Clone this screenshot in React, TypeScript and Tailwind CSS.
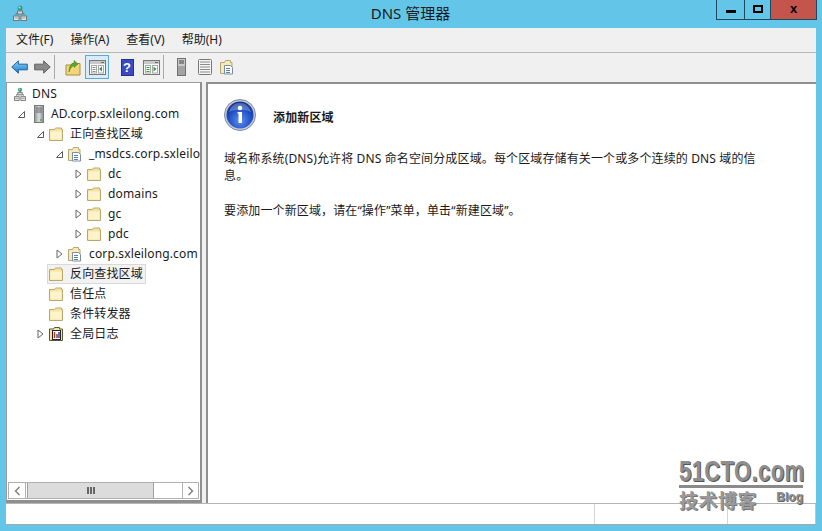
import React from "react";

const font = { fontFamily: '"Noto Sans","Noto Sans CJK SC",sans-serif' };

function Folder({ tint = "#f7e3a1" }: { tint?: string }) {
  return (
    <svg width="16" height="16" viewBox="0 0 16 16" className="shrink-0">
      <path d="M1.5 3.5h5l1 -1.5h6v1.5h1v11h-13z" fill={tint} stroke="#b9a86e" strokeWidth="1" />
      <path d="M2.5 5.5h11v8h-11z" fill="#fdf3cc" />
    </svg>
  );
}

function Zone() {
  return (
    <svg width="16" height="16" viewBox="0 0 16 16" className="shrink-0">
      <path d="M1.5 3.5h4l1 -2h5v2h1.500v11h-11.500z" fill="#f7e9b8" stroke="#b3a676" />
      <path d="M5.500 6.500h6l2 2v6.500h-8z" fill="#fff" stroke="#7b8da3" />
      <path d="M7 9.500h4M7 11.500h4M7 13.500h4" stroke="#5a7fae" />
    </svg>
  );
}

function DnsIcon({ width = 14 }: { width?: number }) {
  return (
    <svg width={width} height="17" viewBox="0 0 14 17" className="shrink-0">
      <circle cx="7" cy="3" r="2.500" fill="#2f9c8f" />
      <circle cx="6.500" cy="2.500" r="1" fill="#a9e2d0" />
      <path d="M7 5v4M3 10V8.500h8V10" stroke="#777" fill="none" />
      <rect x="4.500" y="6" width="5" height="3" fill="#d8d8d8" stroke="#777" />
      <rect x="0.500" y="11" width="5.500" height="4.500" fill="#e6e6e6" stroke="#777" />
      <rect x="8" y="11" width="5.500" height="4.500" fill="#e6e6e6" stroke="#777" />
      <path d="M1.500 13h3.500M9 13h3.500" stroke="#999" />
    </svg>
  );
}

function ServerIcon() {
  return (
    <span className="flex w-[16px] shrink-0 justify-end pr-px">
      <svg width="10" height="18" viewBox="0 0 10 18" className="shrink-0">
        <defs>
          <linearGradient id="srv" x1="0" x2="1" y1="0" y2="0">
            <stop offset="0" stopColor="#8d9398" />
            <stop offset="0.5" stopColor="#d9dde0" />
            <stop offset="1" stopColor="#858a8e" />
          </linearGradient>
        </defs>
        <rect x="0.500" y="0.500" width="9" height="17" fill="url(#srv)" stroke="#777" />
        <path d="M2 3h6M2 5h6M2 7h6" stroke="#666" />
        <rect x="6" y="14" width="2" height="2" fill="#58b947" />
      </svg>
    </span>
  );
}

function LogIcon() {
  return (
    <svg width="16" height="16" viewBox="0 0 16 16" className="shrink-0">
      <path d="M1.500 3h4l1-1.500h5v1.500h3v11.500h-13z" fill="#f3e3a6" stroke="#5c5330" />
      <rect x="4.500" y="4.500" width="8" height="9" fill="#fff" stroke="#222" />
      <path d="M6.500 6v6M9 8v4" stroke="#b1342a" strokeWidth="1.500" />
      <path d="M11 6v6" stroke="#2a4fa8" strokeWidth="1.500" />
    </svg>
  );
}

function Expander({ open }: { open?: boolean }) {
  return (
    <svg width="7" height="10" viewBox="0 0 7 10" className="shrink-0">
      {open ? (
        <path d="M6.500 2.500v6h-6z" fill="#fff" stroke="#595959" />
      ) : (
        <path d="M1 1l5 4 -5 4z" fill="#fff" stroke="#666" />
      )}
    </svg>
  );
}

function Row({
  depth,
  exp,
  icon,
  label,
  selected,
}: {
  depth: string;
  exp?: "open" | "closed";
  icon: React.ReactNode;
  label: string;
  selected?: boolean;
}) {
  return (
    <div className={`flex h-5 items-center ${depth}`}>
      <span className="flex w-[10px] shrink-0 justify-start">
        {exp ? <Expander open={exp === "open"} /> : null}
      </span>
      <span
        className={`flex h-5 items-center gap-[5px] pr-[2px] ${
          selected ? "border border-[#d9d9d9] bg-[#f2f2f2]" : "pl-[1px]"
        }`}
      >
        {icon}
        <span className="whitespace-nowrap pl-[1px] text-[12px] leading-5 tracking-[0.14px] text-[#1a1a1a]">{label}</span>
      </span>
    </div>
  );
}

function Back() {
  return (
    <svg width="17" height="16" viewBox="0 0 18 16">
      <defs>
        <linearGradient id="bk" x1="0" x2="0" y1="0" y2="1">
          <stop offset="0" stopColor="#8fd3f7" />
          <stop offset="1" stopColor="#1778c9" />
        </linearGradient>
      </defs>
      <path d="M0.800 8l7-6.500v3.500h9.500v6h-9.500v3.500z" fill="url(#bk)" stroke="#14609f" />
    </svg>
  );
}

function Forward() {
  return (
    <svg width="17" height="16" viewBox="0 0 18 16">
      <path d="M17.200 8l-7-6.500v3.500h-9.500v6h9.500v3.500z" fill="#8a8a8a" stroke="#5c5c5c" />
    </svg>
  );
}

function UpFolder() {
  return (
    <svg width="16" height="18" viewBox="0 0 16 18">
      <path d="M1 7h5l1-1.500h8v11.500h-14z" fill="#f2d679" stroke="#a98e3e" />
      <path d="M4 14c0-5 1.500-8 5-9V2.500l4 3.500-4 3.500V7.500c-2 .5-4 3-5 6.500z" fill="#5ea72a" stroke="#3e7a17" strokeWidth="0.500" />
    </svg>
  );
}

function Pane({ side }: { side: "l" | "r" }) {
  return (
    <svg width="17" height="15" viewBox="0 0 17 15">
      <rect x="0.500" y="0.500" width="16" height="14" fill="#f7f7f7" stroke="#777" />
      <rect x="1" y="1" width="15" height="3" fill="#c9c9c9" />
      <path d="M12 2.500h3" stroke="#666" />
      <rect x="2.500" y="5.500" width="5" height="7.500" fill="#fff" stroke="#aaa" />
      <path d="M3.500 7.500h3M3.500 9.500h3M3.500 11.500h3" stroke={side === "l" ? "#888" : "#2f9d3a"} />
      <rect x="9.500" y="5.500" width="5" height="7.500" fill="#fff" stroke="#aaa" />
      {side === "l" ? (
        <path d="M13 6.500v5l-3-2.500z" fill="#2f9d3a" />
      ) : (
        <path d="M10.500 6.500v5l3-2.500z" fill="#2f9d3a" />
      )}
    </svg>
  );
}

function Help() {
  return (
    <span
      className="flex h-[17px] w-[13px] items-center justify-center border border-[#23319a] bg-[#3a49c4] text-[13px] font-bold leading-none text-white"
      style={{ fontFamily: '"Liberation Sans",sans-serif' }}
    >
      ?
    </span>
  );
}

function TowerTool() {
  return (
    <svg width="9" height="18" viewBox="0 0 9 18">
      <rect x="0.500" y="0.500" width="8" height="17" fill="#c9c9c9" stroke="#707070" />
      <path d="M2 3h5M2 5h5" stroke="#444" />
      <rect x="1" y="8" width="7" height="9" fill="#a3a3a3" />
    </svg>
  );
}

function ListTool() {
  return (
    <svg width="14" height="16" viewBox="0 0 14 16">
      <rect x="0.500" y="0.500" width="13" height="15" rx="1" fill="#f5f5f5" stroke="#777" />
      <path d="M2 3h10M2 5.500h10M2 8h10M2 10.500h10M2 13h10" stroke="#8a8a8a" />
    </svg>
  );
}

function InfoIcon() {
  return (
    <svg width="32" height="32" viewBox="0 0 32 32" className="shrink-0">
      <defs>
        <radialGradient id="inf" cx="0.500" cy="0.700" r="0.700">
          <stop offset="0" stopColor="#5f8ff0" />
          <stop offset="0.600" stopColor="#1f4fc4" />
          <stop offset="1" stopColor="#12308a" />
        </radialGradient>
      </defs>
      <circle cx="16" cy="16" r="15.500" fill="#c6ccd8" stroke="#7f8aa0" />
      <circle cx="16" cy="16" r="13.500" fill="url(#inf)" />
      <path d="M5 13c2-6 6-9 11-9s9 3 11 9c-6-3-16-3-22 0z" fill="#fff" fillOpacity="0.250" />
      <circle cx="16" cy="9" r="2.300" fill="#fff" />
      <path d="M13.500 13h4.500v11h-3.500v-9.500h-1z" fill="#fff" />
    </svg>
  );
}

function ToolBtn({ children, active, narrow }: { children: React.ReactNode; active?: boolean; narrow?: boolean }) {
  return (
    <span
      className={`flex h-[24px] items-center justify-center ${narrow ? "w-[20px]" : "w-[24px]"} ${
        active ? "border border-[#5aa9d6] bg-[#d7ecf8]" : ""
      }`}
    >
      {children}
    </span>
  );
}

export default function App() {
  return (
    <div className="relative flex h-[531px] w-[822px] flex-col overflow-hidden bg-[#63c6e8]" style={font}>
      <div className="flex h-[28px] shrink-0">
        <div className="flex w-[27px] justify-end pt-[5px]">
          <DnsIcon />
        </div>
        <div className="flex-1 pl-[78px] pt-[3px] text-center text-[15px] leading-[20px] text-[#1a1a1a]">DNS 管理器</div>
        <div className="mr-[5px] flex h-[20px] items-stretch border border-t-0 border-[#1f4a5e]">
          <span className="flex w-[28px] items-end justify-center border-r border-[#1f4a5e] pb-[6px]">
            <span className="h-[3px] w-[10px] bg-black" />
          </span>
          <span className="flex w-[26px] items-center justify-center border-r border-[#1f4a5e] pb-[2px]">
            <span className="h-[8px] w-[10px] border-2 border-black" />
          </span>
          <span
            className="flex w-[45px] items-center justify-center bg-[#c4554d] pb-[2px] text-[13px] font-bold leading-none text-black"
            style={{ fontFamily: '"Liberation Sans",sans-serif' }}
          >
            x
          </span>
        </div>
      </div>

      <div className="mx-[6px] mb-[6px] flex min-h-0 flex-1 flex-col border-b border-[#a7a7a7] bg-[#f0f0f0]">
        <div className="flex h-[25px] shrink-0 items-center gap-[17px] border-b border-[#b5b5b5] pl-[10px] text-[12px] text-[#1a1a1a]">
          <span>文件(F)</span>
          <span>操作(A)</span>
          <span>查看(V)</span>
          <span>帮助(H)</span>
        </div>
        <div className="flex h-[29px] shrink-0 items-center pb-[1px] pl-[5px]">
          <Back />
          <span className="w-[6px]" />
          <Forward />
          <span className="ml-[3px] mr-[6px] h-[24px] w-px bg-[#a9a9a9]" />
          <ToolBtn><UpFolder /></ToolBtn>
          <ToolBtn active><Pane side="l" /></ToolBtn>
          <span className="w-[6px]" />
          <ToolBtn><Help /></ToolBtn>
          <ToolBtn><Pane side="r" /></ToolBtn>
          <span className="mr-[5px] h-[24px] w-px bg-[#a9a9a9]" />
          <ToolBtn><TowerTool /></ToolBtn>
          <ToolBtn><ListTool /></ToolBtn>
          <ToolBtn narrow><Zone /></ToolBtn>
        </div>

        <div className="flex min-h-0 flex-1 border-b border-[#b5b5b5]">
          <div className="flex w-[196px] shrink-0 flex-col border border-b-[3px] border-r-2 border-[#8f8f8f] border-l-[#9a9a9a] border-t-[#9a9a9a] bg-white">
            <div className="min-h-0 flex-1 overflow-hidden pt-px">
              <Row depth="-ml-[8px]" icon={<span className="flex w-[16px] justify-end"><DnsIcon width={12} /></span>} label="DNS" />
              <Row depth="pl-[11px]" exp="open" icon={<ServerIcon />} label="AD.corp.sxleilong.com" />
              <Row depth="pl-[30px]" exp="open" icon={<Folder />} label="正向查找区域" />
              <Row depth="pl-[49px]" exp="open" icon={<Zone />} label="_msdcs.corp.sxleilo" />
              <Row depth="pl-[68px]" exp="closed" icon={<Folder />} label="dc" />
              <Row depth="pl-[68px]" exp="closed" icon={<Folder />} label="domains" />
              <Row depth="pl-[68px]" exp="closed" icon={<Folder />} label="gc" />
              <Row depth="pl-[68px]" exp="closed" icon={<Folder />} label="pdc" />
              <Row depth="pl-[49px]" exp="closed" icon={<Zone />} label="corp.sxleilong.com" />
              <Row depth="pl-[30px]" icon={<Folder />} label="反向查找区域" selected />
              <Row depth="pl-[30px]" icon={<Folder />} label="信任点" />
              <Row depth="pl-[30px]" icon={<Folder />} label="条件转发器" />
              <Row depth="pl-[30px]" exp="closed" icon={<LogIcon />} label="全局日志" />
            </div>
            <div className="mx-px mb-px flex h-[17px] shrink-0 items-stretch border border-[#b0b0b0] bg-white">
              <span className="flex w-[17px] items-center justify-center border-r border-[#b0b0b0] text-[#777]">
                <svg width="7" height="10" viewBox="0 0 7 10"><path d="M5.500 1L1.500 5l4 4" fill="none" stroke="#777" strokeWidth="1.300" /></svg>
              </span>
              <span className="ml-px flex w-[127px] items-center justify-center border-x border-[#a0a0a0] bg-[#dcdcdc]">
                <span className="flex gap-px">
                  <span className="h-[7px] w-[2px] bg-[#666]" />
                  <span className="h-[7px] w-[2px] bg-[#666]" />
                  <span className="h-[7px] w-[2px] bg-[#666]" />
                </span>
              </span>
              <span className="flex-1" />
              <span className="flex w-[16px] items-center justify-center border-l border-[#b0b0b0]">
                <svg width="7" height="10" viewBox="0 0 7 10"><path d="M1.500 1l4 4-4 4" fill="none" stroke="#777" strokeWidth="1.300" /></svg>
              </span>
            </div>
          </div>
          <div className="w-[4px] shrink-0" />
          <div className="min-w-0 flex-1 border-l-2 border-t-2 border-[#8f8f8f] bg-white pl-[16px] pr-[54px] text-[12px] leading-[17px] tracking-[0.13px] text-[#1a1a1a]">
            <div className="flex items-center pt-[15px]">
              <InfoIcon />
              <span className="pl-[17px] pt-[4px] font-bold">添加新区域</span>
            </div>
            <p className="mt-[19px]">域名称系统(DNS)允许将 DNS 命名空间分成区域。每个区域存储有关一个或多个连续的 DNS 域的信息。</p>
            <p className="mt-[18px]">要添加一个新区域，请在“操作”菜单，单击“新建区域”。</p>
          </div>
        </div>

        <div className="flex h-[20px] shrink-0 border-r border-[#c4c4c4] bg-white">
          <span className="w-[589px] border-r border-[#d4d4d4]" />
          <span className="w-[133px] border-r border-[#d4d4d4]" />
          <span className="flex-1" />
        </div>
      </div>

      <div className="absolute left-[679px] top-[459px] flex w-[124px] flex-col text-[#8e8e8e]">
        <div className="h-[29px] overflow-visible border-b-[3px] border-[#8a8a8a]">
          <div
            className="origin-top scale-y-[1.3] whitespace-nowrap text-center text-[22px] font-bold leading-[20px] tracking-[0.4px] [text-shadow:1px_1px_0_#555]"
            style={{ fontFamily: '"Liberation Sans",sans-serif' }}
          >
            51CTO.com
          </div>
        </div>
        <div className="flex items-start justify-between">
          <span
            className="text-[19px] font-bold leading-[24px] tracking-[0.5px] text-[#9a9a9a] [text-shadow:1px_1px_0_#777]"
            style={{ fontFamily: '"Noto Sans CJK SC",sans-serif' }}
          >
            技术博客
          </span>
          <span
            className="text-[12px] font-bold leading-[18px] [text-shadow:1px_1px_0_#666]"
            style={{ fontFamily: '"Liberation Sans",sans-serif' }}
          >
            Blog
          </span>
        </div>
      </div>
    </div>
  );
}
